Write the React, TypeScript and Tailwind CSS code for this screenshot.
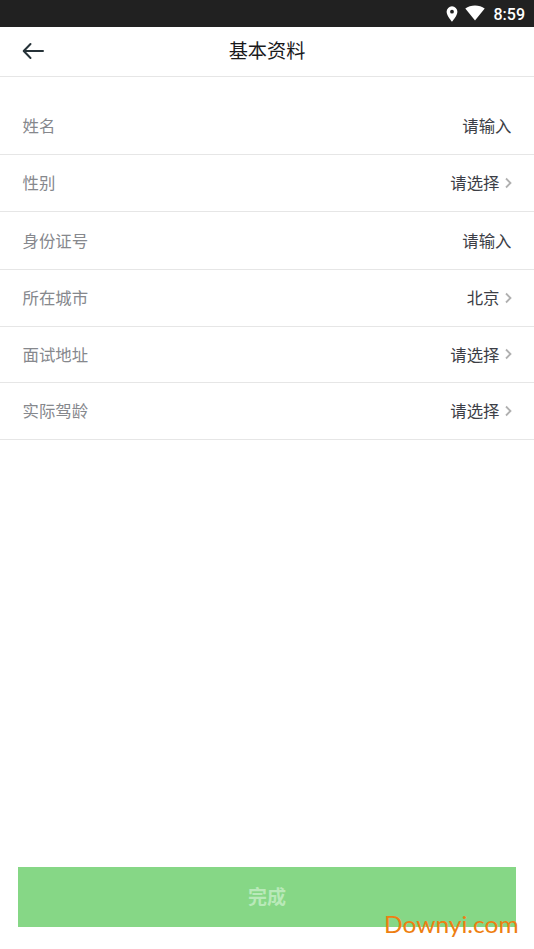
import clsx from "clsx";

type Field = {
  label: string;
  value: string;
  select?: boolean;
  height: string;
};

const fields: Field[] = [
  { label: "姓名", value: "请输入", height: "h-[57px] pb-px" },
  { label: "性别", value: "请选择", select: true, height: "h-[57px] pb-px" },
  { label: "身份证号", value: "请输入", height: "h-[58px] pb-px" },
  { label: "所在城市", value: "北京", select: true, height: "h-[57px] pb-px" },
  { label: "面试地址", value: "请选择", select: true, height: "h-[56px] pb-px" },
  { label: "实际驾龄", value: "请选择", select: true, height: "h-[57px] pb-px" },
];

function StatusBar() {
  return (
    <div className="flex h-[27px] shrink-0 items-center justify-end bg-[#212121] pr-[9px] text-white">
      <svg viewBox="0 0 12 16" className="mr-[7px] h-[16px] w-[12px]" fill="currentColor">
        <path
          fillRule="evenodd"
          d="M6 .3A5.4 5.4 0 0 0 .6 5.7C.6 9.6 6 15.7 6 15.7s5.4-6.1 5.4-10A5.4 5.4 0 0 0 6 .3Zm0 3.5a1.9 1.9 0 1 1 0 3.8 1.9 1.9 0 0 1 0-3.8Z"
        />
      </svg>
      <svg viewBox="0 0 20 16" className="mr-[9px] mb-px h-[16px] w-[20px]" fill="currentColor">
        <path d="M10 15.6 19.7 3.4C17 1.4 13.7 .4 10 .4S3 1.4 .3 3.4Z" />
      </svg>
      <span className="mt-[2px] font-['Roboto',sans-serif] text-[16px] leading-none font-medium">8:59</span>
    </div>
  );
}

function Header() {
  return (
    <header className="grid h-[50px] shrink-0 grid-cols-[1fr_auto_1fr] items-center border-b border-[#e6e6e6] px-[22px] pb-px">
      <button aria-label="返回">
        <svg
          viewBox="0 0 22 18"
          className="h-[18px] w-[22px] text-[#263238]"
          fill="none"
          stroke="currentColor"
          strokeWidth="2"
          strokeLinecap="round"
          strokeLinejoin="round"
        >
          <path d="M21 9H2M8.5 2 1.7 9l6.8 7" />
        </svg>
      </button>
      <h1 className="text-[19.2px] leading-none text-[#1a1a1c]">基本资料</h1>
    </header>
  );
}

function FieldRow({ label, value, select, height }: Field) {
  return (
    <div className={clsx("flex items-center justify-between border-b border-[#e6e6e6] px-[22.5px] text-[16.4px] leading-none", height)}>
      <span className="text-[#86888d]">{label}</span>
      <span className="flex items-center text-[#3c3e46]">
        {value}
        {select && (
          <svg
            viewBox="0 0 7 12"
            className="ml-[5px] h-[12px] w-[7px] text-[#b0b0b0]"
            fill="none"
            stroke="currentColor"
            strokeWidth="1.8"
          >
            <path d="M1 1.5 5.5 6 1 10.5" />
          </svg>
        )}
      </span>
    </div>
  );
}

export default function App() {
  return (
    <div className="relative flex h-[949px] w-[534px] flex-col bg-white font-['Noto_Sans_CJK_SC',sans-serif]">
      <StatusBar />
      <Header />
      <main className="flex-1 pt-[21px]">
        {fields.map((field) => (
          <FieldRow key={field.label} {...field} />
        ))}
      </main>
      <footer className="px-[18px] pb-[22px]">
        <button className="h-[60px] w-full bg-[#86d786] pb-[3px] text-[19px] leading-none font-bold text-[#b9e9b9]">
          完成
        </button>
      </footer>

      {/* Watermark over the button corner */}
      <span className="absolute top-[911px] left-[384px] origin-left scale-x-[1.065] font-['Lato',sans-serif] text-[23px] leading-[26px] text-[#ee7f12]">
        Downyi.com
      </span>
    </div>
  );
}
